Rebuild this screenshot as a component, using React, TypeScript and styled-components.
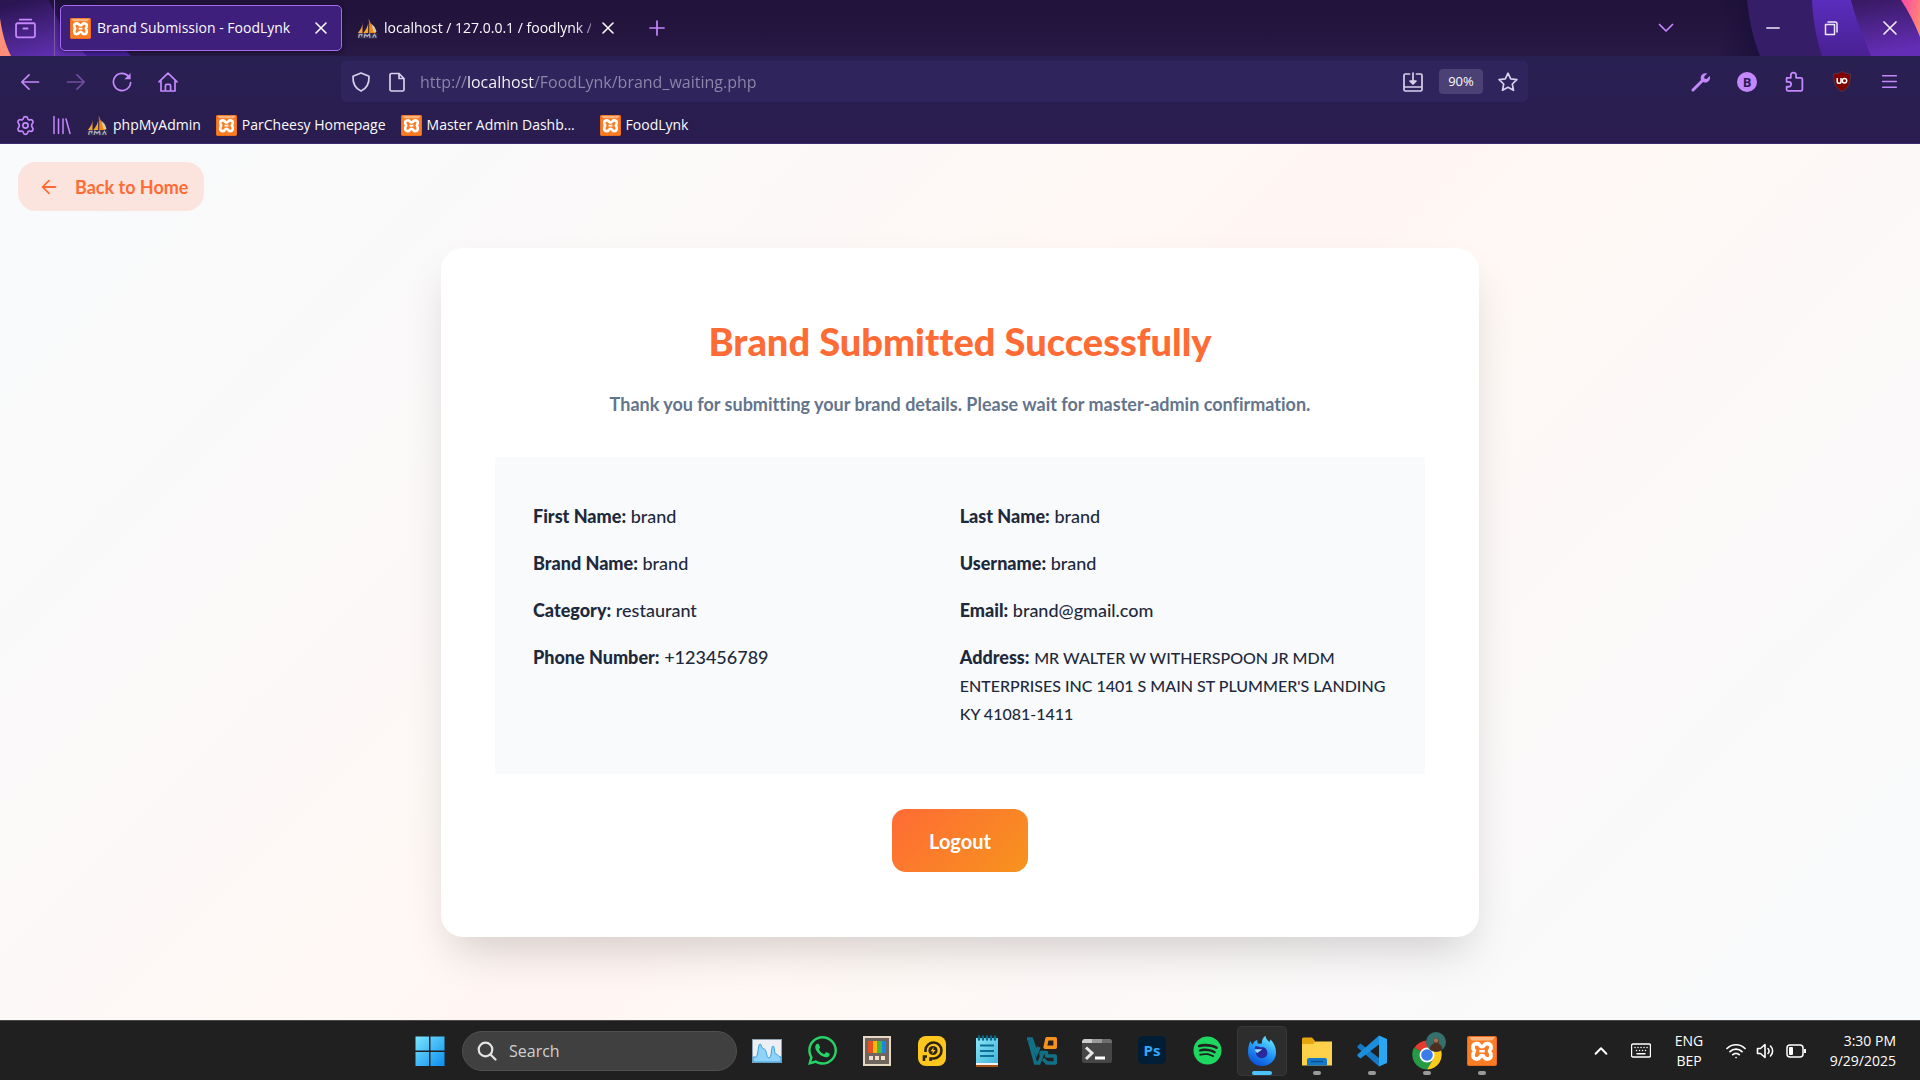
import React from "react";
import styled, { createGlobalStyle, css } from "styled-components";
import { FaWhatsapp, FaSpotify } from "react-icons/fa";

const UI = `"Open Sans", "Noto Sans", sans-serif`;
const BRAND = `Lato, "Liberation Sans", sans-serif`;
const LILAC = "#c488fc";
const MIST = "#d9d0ec";

const GlobalStyle = createGlobalStyle`
  *, *::before, *::after { box-sizing: border-box; }
  body { margin: 0; font-family: ${UI}; }
  button { font: inherit; color: inherit; background: none; border: 0; padding: 0; cursor: pointer; }
  a { color: inherit; text-decoration: none; }
  svg { display: block; flex: none; }
`;

const Screen = styled.div`
  display: flex;
  flex-direction: column;
  min-height: 100vh;
`;

/* ---------- browser chrome ---------- */

const Chrome = styled.header`
  position: relative;
  background: #251741;
`;

const ThemeArt = styled.svg<{ $side: "left" | "right" }>`
  position: absolute;
  top: 0;
  ${(p) => (p.$side === "left" ? "left: 0;" : "right: 0;")}
`;

const TabStrip = styled.div`
  position: relative;
  height: 56px;
  background: linear-gradient(#201239, #271845);
`;

const TabLayer = styled.div`
  position: relative;
  display: flex;
  align-items: center;
  height: 56px;
`;

const IconButton = styled.button<{ $w?: number; $tone?: string }>`
  display: flex;
  align-items: center;
  justify-content: center;
  width: ${(p) => p.$w ?? 46}px;
  height: 36px;
  color: ${(p) => p.$tone ?? LILAC};
  &:disabled { opacity: 0.45; }
`;

const ViewButton = styled(IconButton)`
  width: 55px;
  height: 56px;
  padding-right: 3px;
  border-right: 1px solid #7a5aa8;
`;

const Tab = styled.div<{ $active?: boolean }>`
  display: flex;
  align-items: center;
  gap: 6px;
  width: 282px;
  height: 46px;
  margin-left: 5px;
  padding: 0 9px;
  border-radius: 5px;
  border: 1px solid transparent;
  color: #fbfbfe;
  font-size: 14px;
  ${(p) =>
    p.$active &&
    css`
      background: #3e1f7b;
      border-color: #a66bf2;
      box-shadow: 0 1px 4px rgba(0, 0, 0, 0.5);
    `}
`;

const TabTitle = styled.button<{ $fade?: boolean }>`
  flex: 1;
  min-width: 0;
  white-space: nowrap;
  text-align: left;
  line-height: 24px;
  ${(p) => p.$fade && css`mask-image: linear-gradient(90deg, #000 92%, transparent 108%);`}
`;

const CloseTab = styled(IconButton)`
  width: 22px;
  height: 24px;
  color: #fbfbfe;
`;

const Push = styled.div`
  flex: 1;
`;

const WindowControls = styled.div`
  display: flex;
  margin-left: 48px;
`;

const Toolbars = styled.div`
  position: relative;
  background: linear-gradient(#292052, #2a1c4f);
  border-bottom: 1px solid #3b2c74;
`;

const NavBar = styled.div`
  display: grid;
  grid-template-columns: 341px minmax(0, 1187px) minmax(240px, 1fr);
  align-items: center;
  height: 51px;
`;

const Group = styled.div<{ $end?: boolean }>`
  display: flex;
  align-items: center;
  padding: 0 8px 0 7px;
  ${(p) => p.$end && css`justify-content: flex-end;`}
`;

const UrlBar = styled.form`
  display: flex;
  align-items: center;
  height: 41px;
  padding: 0 3px 0 2px;
  border-radius: 5px;
  background: #2f255c;
`;

const UrlInput = styled.input`
  flex: 1;
  min-width: 0;
  height: 28px;
  margin-left: 5px;
  padding: 0;
  border: 0;
  outline: 0;
  font-family: ${UI};
  font-size: 16px;
  color: transparent;
  background: linear-gradient(90deg, #8f86ab 47px, #fbfbfe 47px, #fbfbfe 114px, #8f86ab 114px);
  background-clip: text;
  -webkit-background-clip: text;
`;

const Zoom = styled.button`
  width: 44px;
  height: 25px;
  margin: 0 8px;
  border-radius: 4px;
  background: #4c4175;
  color: #fbfbfe;
  font-size: 13px;
  line-height: 25px;
`;

const Bookmarks = styled.nav`
  display: flex;
  align-items: center;
  height: 36px;
  padding: 0 7px;
`;

const Bookmark = styled.a`
  display: flex;
  align-items: center;
  gap: 5px;
  padding: 0 8px 0 7px;
  color: #fbfbfe;
  font-size: 14px;
  line-height: 24px;
  white-space: nowrap;
`;

const BookmarkLabel = styled.span<{ $w?: number }>`
  ${(p) => p.$w && css`width: ${p.$w}px;`}
`;

const Avatar = styled.span`
  display: grid;
  place-items: center;
  width: 20px;
  height: 20px;
  border-radius: 50%;
  background: ${LILAC};
  color: #2a1d50;
  font-size: 13px;
  font-weight: 700;
  line-height: 20px;
`;

/* ---------- page ---------- */

const Page = styled.main`
  flex: 1;
  display: flex;
  flex-direction: column;
  padding: 18px;
  font-family: ${BRAND};
  font-variant-ligatures: none;
  background: linear-gradient(135deg, #f8fafc 0%, #faf9f9 18%, #fcf8f8 30%, #fff8f4 43%, #fff5f3 50%, #fff8f4 57%, #fcf8f8 70%, #faf9f9 82%, #f8fafc 100%);
`;

const BackLink = styled.a`
  align-self: flex-start;
  display: flex;
  align-items: center;
  gap: 18px;
  height: 49px;
  padding: 0 16px 0 23px;
  border-radius: 18px;
  background: #fbe4dd;
  color: #ff6b35;
  font-size: 18px;
  font-weight: 700;
`;

const Card = styled.section`
  width: 100%;
  max-width: 1038px;
  margin: 37px auto 64px;
  padding: 71px 54px 65px;
  border-radius: 22px;
  background: #fff;
  box-shadow: 0 22px 45px -11px rgba(0, 0, 0, 0.18);
  text-align: center;
`;

const Title = styled.h1`
  margin: 0;
  color: #ff6b35;
  font-size: 38px;
  font-weight: 900;
  line-height: 44px;
`;

const Lead = styled.p`
  margin: 27px 0 39px;
  color: #64748b;
  font-size: 18px;
  font-weight: 700;
  line-height: 28px;
`;

const Details = styled.dl`
  display: grid;
  grid-template-columns: minmax(0, 99fr) minmax(0, 101fr);
  row-gap: 19px;
  margin: 0 0 35px;
  padding: 45px 30px 47px 38px;
  background: #f8fafc;
  text-align: left;
`;

const Field = styled.div`
  color: #1e293b;
  font-size: 18px;
  line-height: 28px;
`;

const Term = styled.dt`
  display: inline;
  font-weight: 900;
`;

const Value = styled.dd<{ $small?: boolean }>`
  display: inline;
  margin: 0;
  font-weight: 500;
  ${(p) => p.$small && css`font-size: 16px; line-height: 20px;`}
`;

const Logout = styled.button`
  height: 63px;
  padding: 0 37px;
  border-radius: 14px;
  background: linear-gradient(135deg, #ff6b35, #f7931e);
  color: #fff;
  font-size: 20px;
  font-weight: 700;
`;

/* ---------- taskbar ---------- */

const Taskbar = styled.footer`
  display: grid;
  grid-template-columns: 1fr auto 1fr;
  align-items: center;
  height: 60px;
  border-top: 1px solid #4a4a4a;
  background: #202020;
  color: #fff;
`;

const Apps = styled.div`
  grid-column: 2;
  display: flex;
  align-items: center;
  gap: 5px;
  padding-right: 8px;
`;

const AppButton = styled.button<{ $state?: "open" | "active" }>`
  display: grid;
  place-items: center;
  width: 50px;
  height: 50px;
  border-radius: 5px;
  position: relative;
  ${(p) => p.$state === "active" && css`background: #2d2d2d; box-shadow: inset 0 0 0 1px #383838;`}
  ${(p) =>
    p.$state &&
    css`
      &::after {
        content: "";
        position: absolute;
        bottom: 1px;
        left: 50%;
        width: ${p.$state === "active" ? 20 : 8}px;
        height: 4px;
        border-radius: 2px;
        transform: translateX(-50%);
        background: ${p.$state === "active" ? "#4cc2ff" : "#9a9a9a"};
      }
    `}
`;

const SearchBox = styled.label`
  display: flex;
  align-items: center;
  gap: 12px;
  width: 275px;
  height: 40px;
  margin-left: 2px;
  padding: 0 14px;
  border: 1px solid #505050;
  border-radius: 20px;
  background: #404040;
`;

const SearchInput = styled.input`
  flex: 1;
  min-width: 0;
  border: 0;
  outline: 0;
  padding: 0;
  background: none;
  color: #fff;
  font-family: ${UI};
  font-size: 16px;
  &::placeholder { color: #d0d0d0; opacity: 1; }
`;

const PsIcon = styled.span`
  display: grid;
  place-items: center;
  width: 28px;
  height: 28px;
  margin-bottom: 2px;
  border-radius: 5px;
  background: #001e36;
  color: #31a8ff;
  font-size: 15px;
  font-weight: 700;
  line-height: 20px;
`;

const Tray = styled.div`
  display: flex;
  align-items: center;
  justify-content: flex-end;
  padding-right: 24px;
`;

const TrayButton = styled.button<{ $w: number }>`
  display: flex;
  align-items: center;
  justify-content: center;
  gap: 10px;
  width: ${(p) => p.$w}px;
  height: 40px;
`;

const TrayText = styled.button<{ $w: number; $end?: boolean }>`
  width: ${(p) => p.$w}px;
  font-size: 14px;
  line-height: 20px;
  text-align: ${(p) => (p.$end ? "right" : "center")};
`;

const Line = styled.span`
  display: block;
`;

/* ---------- icons ---------- */

const stroke = { fill: "none", stroke: "currentColor", strokeWidth: 1.7, strokeLinecap: "round", strokeLinejoin: "round" } as const;

const Glyph = ({ d, s = 20, w }: { d: string; s?: number; w?: number }) => (
  <svg width={s} height={s} viewBox="0 0 20 20" {...stroke} strokeWidth={w ?? 1.7} aria-hidden="true">
    <path d={d} />
  </svg>
);

const CROSS = "M5 5l10 10M15 5L5 15";
const ARROW_L = "M18.5 10H1.8M9 2.8L1.8 10 9 17.2";
const ARROW_R = "M1.5 10h16.7M11 2.8l7.2 7.2-7.2 7.2";
const HOME = "M1 9.8L10 1.2l9 8.6M3 8v11h14V8M7.4 19v-5a1.6 1.6 0 011.6-1.6h2a1.6 1.6 0 011.6 1.6v5";

const Xampp = ({ s = 21 }: { s?: number }) => (
  <svg width={s} height={s} viewBox="0 0 30 30" aria-hidden="true">
    <rect width="30" height="30" rx="2" fill="#e9681a" />
    <rect x="1" y="1" width="28" height="28" rx="1.5" fill="#fa7d25" />
    <path d="M2 1h26l-3 3.500H5z" fill="#fdb57f" />
    <path
      d="M10 7.600c-4.600 0-5 4-2.600 7.400-2.400 3.600-2 8 2.600 8 3.200 0 2.400-3.400 5-3.400s1.800 3.400 5 3.400c4.600 0 5-4.400 2.600-8 2.400-3.400 2-7.400-2.600-7.400-3.200 0-2.400 3-5 3s-1.800-3-5-3z"
      fill="#fa7d25"
      stroke="#fff"
      strokeWidth="3.8"
      strokeLinejoin="round"
    />
    <path d="M12.200 15.200h5.600" stroke="#fff" strokeWidth="2.600" />
  </svg>
);

const Pma = () => (
  <svg width="21" height="21" viewBox="0 0 21 21" aria-hidden="true">
    <path d="M5.500 3.500C5.700 8 4 11.500.8 15h4.700z" fill="#f2a33a" />
    <path d="M11.200 0c.8 5-.6 10-5 15h5z" fill="#f7a52c" />
    <path d="M12.200 1c1 4 3.300 9 7 14h-7z" fill="#f08c12" />
    <path d="M14 5.500c3 2 4.800 4.800 5.500 8.500h-3z" fill="#d9c9a8" />
    <path d="M0 15.500h21L19.500 20.500H1z" fill="#34304f" />
    <path d="M1.500 19.800l1-3.500h2.500l-.5 2M7 19.800l1-3.500 2 2 2.500-2 .5 3.500M15.500 19.800l2-3.500 1.800 3.500" fill="none" stroke="#a9a8bd" strokeWidth="1.300" />
  </svg>
);

const Reload = () => (
  <svg width="20" height="20" viewBox="0 0 20 20" {...stroke} aria-hidden="true">
    <path d="M18.600 10.500A8.600 8.600 0 1116.400 4.200" />
    <path d="M18.600 1v6.200h-6.200z" fill="currentColor" stroke="none" />
  </svg>
);

const Gear = () => (
  <svg width="21" height="21" viewBox="0 0 24 24" {...stroke} strokeWidth={1.9} aria-hidden="true">
    <path d="M9.500 3.800C10 1.300 14 1.300 14.500 3.800c.3 1.700 1.500 2.200 3 1.600 2.300-.8 4.200 2.500 2.500 4.200-1.300 1.200-1.300 3.600 0 4.800 1.700 1.700-.2 5-2.500 4.200-1.500-.6-2.700-.1-3 1.600-.5 2.500-4.500 2.500-5 0-.3-1.700-1.500-2.200-3-1.600-2.300.8-4.200-2.500-2.500-4.200 1.300-1.200 1.300-3.600 0-4.800C2.300 7.900 4.200 4.600 6.500 5.400c1.500.6 2.700.1 3-1.600z" />
    <circle cx="12" cy="12" r="3" />
  </svg>
);

const Wrench = () => (
  <svg width="20" height="20" viewBox="0 0 20 20" aria-hidden="true">
    <path d="M2 18l8.500-8.500" stroke="currentColor" strokeWidth="3" strokeLinecap="round" />
    <path d="M16.200 1.600l-3 3 .3 2.200 2.200.3 3-3c1 2.500-.3 5.600-3.200 6.300-3.500.9-6.600-2.200-5.700-5.700C10.500 1.900 13.600.6 16.200 1.600z" fill="currentColor" />
  </svg>
);

const UBlock = () => (
  <svg width="18" height="21" viewBox="0 0 18 21" aria-hidden="true">
    <path d="M9 .5c2.500 1.500 5 2.300 8.500 2.500 0 8-1.500 14-8.500 17.500C2 17 .5 11 .5 3 4 2.800 6.500 2 9 .5z" fill="#800000" stroke="#54354d" />
    <path d="M4.200 7v3.400a1.900 1.900 0 003.800 0V7" fill="none" stroke="#fff" strokeWidth="1.500" />
    <circle cx="11.500" cy="9.800" r="2.200" fill="none" stroke="#fff" strokeWidth="1.500" />
  </svg>
);

const Windows = () => (
  <svg width="30" height="30" viewBox="0 0 30 30" aria-hidden="true">
    <defs>
      <linearGradient id="win" x1="0" y1="0" x2="1" y2="1">
        <stop offset="0" stopColor="#7be6ff" />
        <stop offset="1" stopColor="#0a8df0" />
      </linearGradient>
    </defs>
    <path fill="url(#win)" d="M.5.500H14v14H.5zM15.500.500H29.500v14H15.500zM.5 16H14v14H.5zM15.500 16H29.500v14h-14z" />
  </svg>
);

const Monitor = () => (
  <svg width="30" height="24" viewBox="0 0 30 24" aria-hidden="true">
    <path d="M0 0h30v24H0z" fill="#8fa3b3" />
    <path d="M1 1h28v22H1z" fill="#eceff3" />
    <path d="M1 18h3c2 0 2-13 4-13s1 5 4 5 2 9 5 9 2-12 4-12 1 8 3 8 2 3 5 3v5H1z" fill="#8fd3fb" stroke="#3b9fdc" />
  </svg>
);

const PowerToys = () => (
  <svg width="28" height="30" viewBox="0 0 28 30" aria-hidden="true">
    <path d="M0 0h28v30H0z" fill="#e6d8c3" />
    <path d="M2 2h24v26H2z" fill="#6e665e" />
    <path d="M5 5h5v12H5z" fill="#e8501f" />
    <path d="M10 5h4v12h-4z" fill="#fbb80c" />
    <path d="M14 5h5v12h-5z" fill="#43b94a" />
    <path d="M19 5h4v12h-4z" fill="#1c86e0" />
    <path d="M6 20h4v4H6zM12 20h4v4h-4zM18 20h4v4h-4z" fill="#f1dfc9" />
  </svg>
);

const Player = () => (
  <svg width="28" height="30" viewBox="0 0 28 30" aria-hidden="true">
    <rect width="28" height="30" rx="8" fill="#fdc71d" />
    <path d="M7.500 16v-2A8 8 0 1116 22.500h-3.500V25M6 25v-4.500h3" fill="none" stroke="#2d2410" strokeWidth="2.600" />
    <circle cx="15" cy="14.500" r="4.600" fill="#2d2410" />
    <path d="M15.800 11l-3.300 4.300h2.300l-.6 2.900 3.300-4.300h-2.300z" fill="#fdc71d" />
  </svg>
);

const Notepad = () => (
  <svg width="22" height="32" viewBox="0 0 22 32" aria-hidden="true">
    <defs>
      <linearGradient id="note" x1="0" y1="0" x2="1" y2="1">
        <stop offset="0" stopColor="#8be6f5" />
        <stop offset="1" stopColor="#3fb4dc" />
      </linearGradient>
    </defs>
    <path d="M0 28h22v4H0z" fill="#a8500f" />
    <path d="M0 27h22v3H0z" fill="#f3f3f3" />
    <path d="M0 3h22v25H0z" fill="url(#note)" />
    <path d="M4 10.500h14M4 16h14M4 21h14" stroke="#0e6f96" strokeWidth="2" />
    <path d="M3 1.500v3M7 1.500v3M11 1.500v3M15 1.500v3M19 1.500v3" stroke="#0b6a8c" strokeWidth="2.400" strokeLinecap="round" />
  </svg>
);

const Ve = () => (
  <svg width="30" height="28" viewBox="0 0 30 28" aria-hidden="true">
    <path d="M0 2h4.500l5 14 2.500-6M2.500 4l6 22H12l4-10.500" fill="none" stroke="#127086" strokeWidth="3.400" />
    <path d="M14 18.500v-3h5.500v3.500h8.800v7H20l-4-4" fill="none" stroke="#127086" strokeWidth="3.400" strokeLinejoin="round" />
    <path d="M20 1.800h8.200v8.400H18.200z" fill="none" stroke="#f6921e" strokeWidth="3.600" strokeLinejoin="round" />
  </svg>
);

const Terminal = () => (
  <svg width="30" height="24" viewBox="0 0 30 24" aria-hidden="true">
    <rect width="30" height="24" rx="2" fill="#464646" />
    <path d="M2 0h8v4H0V2z" fill="#cccccc" />
    <path d="M10 0h10v4H10z" fill="#9a9a9a" />
    <path d="M20 0h8l2 2v2H20z" fill="#6e6e6e" />
    <path d="M4 8.500l6 5.500-6 6" fill="none" stroke="#e6e6e6" strokeWidth="3" />
    <path d="M13 19h10" stroke="#fff" strokeWidth="3" />
  </svg>
);

const Firefox = () => (
  <svg width="30" height="32" viewBox="0 0 30 32" aria-hidden="true">
    <defs>
      <linearGradient id="fox" x1="0.8" y1="0" x2="0.3" y2="1">
        <stop offset="0" stopColor="#6ff0ff" />
        <stop offset="0.5" stopColor="#2499f8" />
        <stop offset="1" stopColor="#0a4fd8" />
      </linearGradient>
    </defs>
    <path d="M3.600 6c.4 1.600 1 2.700 2 3.500C7 6.500 8.500 5.500 10.500 5c-.6 1.600 0 2.800 1 3.800L15 8.600C14.500 5 16 2.500 18.500.8c0 3 2 4.500 4 6.200l1-2.500C27 8 29 12.500 29 17.500 29 25 22.800 31 15 31S1 25 1 17.500C1 13 1.800 9 3.600 6z" fill="url(#fox)" />
    <path d="M9 15c-1.500-1.500-1.200-2.500-.6-3.600 2.500-1 4.200 1.200 7 .8 2.500 0 5 2 5 5.800 0 3-2.400 5.200-5.400 5.200S9 21 9 18z" fill="#2a2a9c" />
    <path d="M8 14.500c2-1 4 .5 7-.5-1 2-3.500 2.500-4.500 4-1.200-.5-2.200-1.700-2.500-3.500z" fill="#9adfff" />
  </svg>
);

const Folder = () => (
  <svg width="30" height="30" viewBox="0 0 30 30" aria-hidden="true">
    <path d="M0 3a1.500 1.500 0 011.500-1.500H10l3 3.500v5H0z" fill="#e5a50f" />
    <path d="M0 8h11l2.500-2.500H30V29.500H0z" fill="#ffd04a" />
    <path d="M5 29.500V24a2 2 0 012-2h16a2 2 0 012 2v5.500z" fill="#1478c9" />
    <path d="M9 25.500h12" stroke="#0b4f8e" strokeWidth="1.500" />
  </svg>
);

const VsCode = () => (
  <svg width="30" height="32" viewBox="0 0 30 32" aria-hidden="true">
    <path d="M22 9v14L3.500 8.500.5 11v1.500L22 31.500z" fill="#1579c4" />
    <path d="M.5 19.500V21l3 2.500L22 9.500V.5z" fill="#1b8fdd" />
    <path d="M22 .5L30 4v24l-8 3.500z" fill="#2aa7f3" />
  </svg>
);

const ChromeIcon = () => (
  <svg width="38" height="38" viewBox="0 0 38 38" aria-hidden="true">
    <path d="M19 23L6.500 15.700A15 15 0 0132 15.500H19z" fill="#e33b2e" />
    <path d="M19 23l6.500 3.700L19 37.500A15 15 0 016 15.500z" fill="#259b48" />
    <path d="M19 23v-7.500h13a15 15 0 01-13 22l6.500-11z" fill="#fccb1c" />
    <circle cx="19" cy="23" r="7.500" fill="#fff" />
    <circle cx="19" cy="23" r="5.800" fill="#3b7de8" />
    <circle cx="28" cy="10" r="10" fill="#35706c" />
    <path d="M22 17.500c0-4 1.500-5 4-6-1-3 0-5.500 2-5.500 2.500 0 3.500 2.500 2.500 5.500 2 1 4 3 3.500 6-3 3-8 3-12 0z" fill="#4c2f20" />
    <circle cx="28" cy="8.500" r="2.200" fill="#a7714f" />
  </svg>
);

const LeftArt = () => (
  <ThemeArt $side="left" width="150" height="56" viewBox="0 0 150 56" aria-hidden="true">
    <defs>
      <linearGradient id="la" x1="0.3" y1="0" x2="0.7" y2="1">
        <stop offset="0" stopColor="#2b1553" />
        <stop offset="1" stopColor="#6230b4" />
      </linearGradient>
      <linearGradient id="lb" x1="0" y1="0" x2="0" y2="1">
        <stop offset="0" stopColor="#1d1136" />
        <stop offset="1" stopColor="#45209a" />
      </linearGradient>
    </defs>
    <path d="M0 0h95c8 22 20 40 36 56H0z" fill="url(#lb)" />
    <path d="M0 0h49c8 22 21 40 38 56H0z" fill="url(#la)" />
    <path d="M0 18c2 14 5 26 11 38H0z" fill="#ff8f78" />
  </ThemeArt>
);

const RightArt = () => (
  <ThemeArt $side="right" width="220" height="56" viewBox="0 0 220 56" aria-hidden="true">
    <defs>
      <linearGradient id="rs" x1="0" y1="0" x2="1" y2="0">
        <stop offset="0" stopColor="#160e38" stopOpacity="0" />
        <stop offset="1" stopColor="#160e38" />
      </linearGradient>
      <linearGradient id="rb" x1="0" y1="0" x2="0" y2="1">
        <stop offset="0" stopColor="#5a2dbd" />
        <stop offset="1" stopColor="#4a2093" />
      </linearGradient>
      <linearGradient id="rc" x1="0" y1="0" x2="0.2" y2="1">
        <stop offset="0" stopColor="#371961" />
        <stop offset="1" stopColor="#642db5" />
      </linearGradient>
      <linearGradient id="rp" x1="0" y1="0" x2="1" y2="0.4">
        <stop offset="0" stopColor="#ff45a6" />
        <stop offset="1" stopColor="#ff8577" />
      </linearGradient>
    </defs>
    <path d="M20 0h60v56H20z" fill="url(#rs)" />
    <path d="M47 0c2 20 6 38 13 56h160V0z" fill="#351d67" />
    <path d="M112 0c1 20 4 38 10 56h98V0z" fill="url(#rb)" />
    <path d="M151 0c5 20 12 36 20 56h49V0z" fill="url(#rc)" />
    <path d="M201 0c8 12 14 24 19 37V0z" fill="url(#rp)" />
  </ThemeArt>
);

/* ---------- data ---------- */

const fields: { label: string; value: string; small?: boolean }[] = [
  { label: "First Name:", value: "brand" },
  { label: "Last Name:", value: "brand" },
  { label: "Brand Name:", value: "brand" },
  { label: "Username:", value: "brand" },
  { label: "Category:", value: "restaurant" },
  { label: "Email:", value: "brand@gmail.com" },
  { label: "Phone Number:", value: "+123456789" },
  {
    label: "Address:",
    value: "MR WALTER W WITHERSPOON JR MDM ENTERPRISES INC 1401 S MAIN ST PLUMMER'S LANDING KY 41081-1411",
    small: true,
  },
];

const bookmarks: { label: string; icon: React.ReactNode; w?: number }[] = [
  { label: "phpMyAdmin", icon: <Pma /> },
  { label: "ParCheesy Homepage", icon: <Xampp /> },
  { label: "Master Admin Dashb...", icon: <Xampp />, w: 158 },
  { label: "FoodLynk", icon: <Xampp /> },
];

const apps: { name: string; icon: React.ReactNode; state?: "open" | "active" }[] = [
  { name: "Resource Monitor", icon: <Monitor /> },
  { name: "WhatsApp", icon: <FaWhatsapp size={33} color="#25d366" /> },
  { name: "PowerToys", icon: <PowerToys /> },
  { name: "Player", icon: <Player /> },
  { name: "Notepad", icon: <Notepad /> },
  { name: "Editor", icon: <Ve /> },
  { name: "Terminal", icon: <Terminal /> },
  { name: "Photoshop", icon: <PsIcon>Ps</PsIcon> },
  { name: "Spotify", icon: <FaSpotify size={29} color="#1ed760" /> },
  { name: "Firefox", icon: <Firefox />, state: "active" },
  { name: "File Explorer", icon: <Folder />, state: "open" },
  { name: "Visual Studio Code", icon: <VsCode />, state: "open" },
  { name: "Chrome", icon: <ChromeIcon />, state: "open" },
  { name: "XAMPP", icon: <Xampp s={30} />, state: "open" },
];

export default function App() {
  return (
    <Screen>
      <GlobalStyle />
      <Chrome>
        <TabStrip>
          <LeftArt />
          <RightArt />
          <TabLayer>
            <ViewButton aria-label="Firefox View">
              <Glyph s={21} d="M4.500 1.500h11M2.500 5h15a1.500 1.500 0 011.500 1.500v10a2 2 0 01-2 2H3a2 2 0 01-2-2v-10A1.500 1.500 0 012.500 5zM8 10h4" />
            </ViewButton>
            <Tab $active>
              <Xampp />
              <TabTitle>Brand Submission - FoodLynk</TabTitle>
              <CloseTab aria-label="Close tab"><Glyph d={CROSS} w={1.6} /></CloseTab>
            </Tab>
            <Tab>
              <Pma />
              <TabTitle $fade>localhost / 127.0.0.1 / foodlynk /</TabTitle>
              <CloseTab aria-label="Close tab"><Glyph d={CROSS} w={1.6} /></CloseTab>
            </Tab>
            <IconButton $w={56} aria-label="New tab"><Glyph d="M10 3v14M3 10h14" /></IconButton>
            <Push />
            <IconButton $w={60} aria-label="List all tabs"><Glyph d="M3.500 6.500L10 13l6.500-6.500" /></IconButton>
            <WindowControls>
              <IconButton $w={58} $tone="#efe8fb" aria-label="Minimize"><Glyph d="M4 10h12" /></IconButton>
              <IconButton $w={58} $tone="#efe8fb" aria-label="Restore"><Glyph w={1.5} d="M4.500 6.500h9v10h-9zM7 4h7a2 2 0 012 2v8" /></IconButton>
              <IconButton $w={60} $tone="#efe8fb" aria-label="Close"><Glyph d="M4 4l12 12M16 4L4 16" /></IconButton>
            </WindowControls>
          </TabLayer>
        </TabStrip>
        <Toolbars>
          <NavBar>
            <Group>
              <IconButton aria-label="Back"><Glyph d={ARROW_L} /></IconButton>
              <IconButton aria-label="Forward" disabled><Glyph d={ARROW_R} /></IconButton>
              <IconButton aria-label="Reload"><Reload /></IconButton>
              <IconButton aria-label="Home"><Glyph d={HOME} /></IconButton>
            </Group>
            <UrlBar>
              <IconButton type="button" $w={36} $tone={MIST} aria-label="Tracking protection">
                <Glyph d="M10 1l8 3.200c.3 6.800-2.500 12.300-8 14.800C4.500 16.500 1.700 11 2 4.200z" />
              </IconButton>
              <IconButton type="button" $w={36} $tone={MIST} aria-label="Site information">
                <Glyph d="M4.500 1.500H12l5 5v11a1.500 1.500 0 01-1.500 1.500h-11A1.500 1.500 0 013 17.500V3a1.500 1.500 0 011.500-1.500zM12 1.500v5h5z" />
              </IconButton>
              <UrlInput aria-label="Address" defaultValue="http://localhost/FoodLynk/brand_waiting.php" />
              <IconButton type="button" $w={36} $tone={MIST} aria-label="Install page">
                <Glyph d="M6.500 2H2.500A1.500 1.500 0 001 3.500v14A1.500 1.500 0 002.500 19h15a1.500 1.500 0 001.500-1.500v-14A1.500 1.500 0 0017.500 2h-4M10 1v10.500M7 9l3 3 3-3zM1 15h18" />
              </IconButton>
              <Zoom type="button">90%</Zoom>
              <IconButton type="button" $w={34} $tone={MIST} aria-label="Bookmark this page">
                <Glyph d="M10 1.200l2.700 5.700 6.200.8-4.600 4.300 1.200 6.300L10 15.300l-5.500 3 1.200-6.300L1.100 7.700l6.200-.8z" />
              </IconButton>
            </UrlBar>
            <Group $end>
              <IconButton aria-label="Developer tools"><Wrench /></IconButton>
              <IconButton aria-label="Account"><Avatar>B</Avatar></IconButton>
              <IconButton $w={48} aria-label="Extensions">
                <Glyph s={21} d="M2.500 6.500h4V4a2.500 2.500 0 015 0v2.500H16A1.500 1.500 0 0117.500 8v9.500A1.500 1.500 0 0116 19H4a1.500 1.500 0 01-1.500-1.500V15h2a2.300 2.300 0 000-4.600h-2z" />
              </IconButton>
              <IconButton $w={48} aria-label="uBlock Origin"><UBlock /></IconButton>
              <IconButton aria-label="Menu"><Glyph s={21} w={1.5} d="M3.500 4.500h13M3.500 10h13M3.500 15.500h13" /></IconButton>
            </Group>
          </NavBar>
          <Bookmarks aria-label="Bookmarks">
            <IconButton $w={36} aria-label="Settings"><Gear /></IconButton>
            <IconButton $w={37} aria-label="Library"><Glyph w={1.5} d="M2 1.500v17M6.500 4v14.500M11 4v14.500M14 4l4 14.500" /></IconButton>
            {bookmarks.map((b) => (
              <Bookmark href="#" key={b.label}>
                {b.icon}
                <BookmarkLabel $w={b.w}>{b.label}</BookmarkLabel>
              </Bookmark>
            ))}
          </Bookmarks>
        </Toolbars>
      </Chrome>

      <Page>
        <BackLink href="#">
          <Glyph s={16} w={2.2} d="M18 10H2M10 2l-8 8 8 8" />
          Back to Home
        </BackLink>
        <Card>
          <Title>Brand Submitted Successfully</Title>
          <Lead>Thank you for submitting your brand details. Please wait for master-admin confirmation.</Lead>
          <Details>
            {fields.map((f) => (
              <Field key={f.label}>
                <Term>{f.label}</Term> <Value $small={f.small}>{f.value}</Value>
              </Field>
            ))}
          </Details>
          <Logout>Logout</Logout>
        </Card>
      </Page>

      <Taskbar>
        <Apps>
          <AppButton aria-label="Start"><Windows /></AppButton>
          <SearchBox>
            <svg width="20" height="20" viewBox="0 0 20 20" fill="none" stroke="#e4e4e4" strokeWidth="2.200" strokeLinecap="round" aria-hidden="true">
              <circle cx="8.500" cy="8.500" r="6.800" />
              <path d="M13.500 13.500l5 5" />
            </svg>
            <SearchInput placeholder="Search" aria-label="Search" />
          </SearchBox>
          {apps.map((a) => (
            <AppButton key={a.name} aria-label={a.name} $state={a.state}>{a.icon}</AppButton>
          ))}
        </Apps>
        <Tray>
          <TrayButton $w={40} aria-label="Show hidden icons"><Glyph s={18} w={2.2} d="M4 13l6-6 6 6" /></TrayButton>
          <TrayButton $w={40} aria-label="Touch keyboard">
            <Glyph d="M2 3h16a1.500 1.500 0 011.500 1.500v10A1.500 1.500 0 0118 16H2A1.500 1.500 0 01.5 14.500v-10A1.500 1.500 0 012 3zM4 6.500h.1M7 6.500h.1M10 6.500h.1M13 6.500h.1M16 6.500h.1M5.500 9.500h.1M8.500 9.500h.1M11.500 9.500h.1M14.500 9.500h.1M6 12.700h8" w={1.4} />
          </TrayButton>
          <TrayText $w={56} aria-label="Input language"><Line>ENG</Line><Line>BEP</Line></TrayText>
          <TrayButton $w={98} aria-label="Network, volume and battery">
            <Glyph d="M1 7.500a12.700 12.700 0 0118 0M4 10.700a8.500 8.500 0 0112 0M6.800 13.700a4.500 4.500 0 016.400 0M10 16.500h.1" />
            <Glyph w={1.6} d="M1.500 7.500v5h3l4.500 4v-13l-4.500 4zM12 7.500a3.500 3.500 0 010 5M14.500 5a7 7 0 010 10" />
            <svg width="21" height="20" viewBox="0 0 21 20" aria-hidden="true">
              <rect x="1" y="4" width="16" height="12" rx="3" fill="none" stroke="#fff" strokeWidth="1.500" />
              <rect x="3" y="6" width="4" height="8" rx="1" fill="#fff" />
              <path d="M18 8h2v4h-2z" fill="#fff" />
            </svg>
          </TrayButton>
          <TrayText $w={81} $end aria-label="Clock"><Line>3:30 PM</Line><Line>9/29/2025</Line></TrayText>
        </Tray>
      </Taskbar>
    </Screen>
  );
}
